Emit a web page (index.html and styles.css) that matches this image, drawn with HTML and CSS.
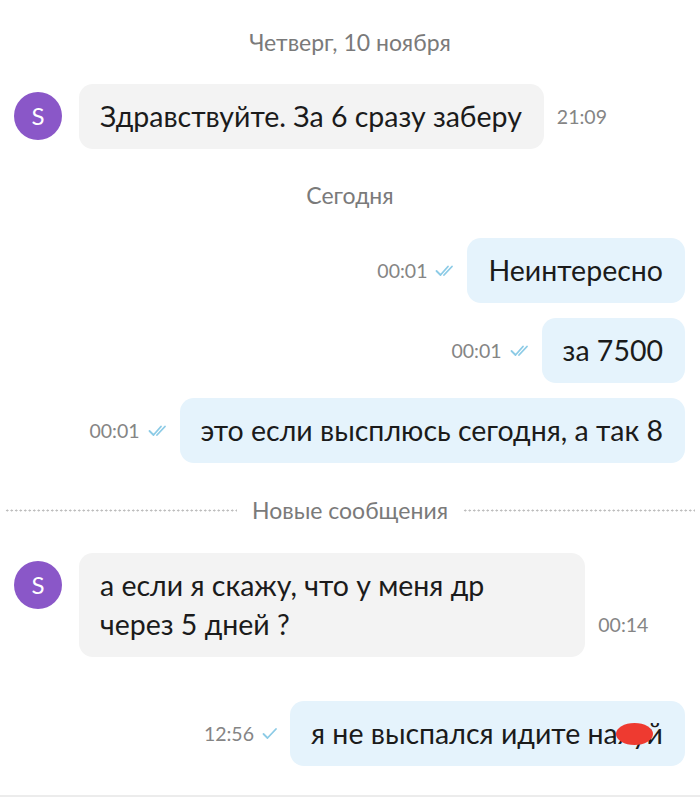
FILE: index.html
```html
<!DOCTYPE html>
<html lang="ru">
<head>
  <meta charset="UTF-8">
  <meta name="viewport" content="width=device-width, initial-scale=1.0">
  <title>Чат</title>
  <link rel="stylesheet" href="styles.css">
</head>
<body>
  <div class="chat">
    <div class="day first">Четверг, 10 ноября</div>

    <div class="row in">
      <div class="avatar">S</div>
      <div class="bubble">Здравствуйте. За 6 сразу заберу</div>
      <div class="time">21:09</div>
    </div>

    <div class="day">Сегодня</div>

    <div class="row out">
      <div class="time">00:01
        <svg class="check" width="22" height="13" viewBox="0 0 22 13"><path d="M1.5 7l4 4L13 2.5M9 11l8-8.5"/></svg>
      </div>
      <div class="bubble">Неинтересно</div>
    </div>

    <div class="row out">
      <div class="time">00:01
        <svg class="check" width="22" height="13" viewBox="0 0 22 13"><path d="M1.5 7l4 4L13 2.5M9 11l8-8.5"/></svg>
      </div>
      <div class="bubble">за 7500</div>
    </div>

    <div class="row out">
      <div class="time">00:01
        <svg class="check" width="22" height="13" viewBox="0 0 22 13"><path d="M1.5 7l4 4L13 2.5M9 11l8-8.5"/></svg>
      </div>
      <div class="bubble">это если высплюсь сегодня, а так 8</div>
    </div>

    <div class="divider">
      <span class="dots"></span>
      <span class="label">Новые сообщения</span>
      <span class="dots"></span>
    </div>

    <div class="row in">
      <div class="avatar">S</div>
      <div class="bubble wide">а если я скажу, что у меня др<br>через 5 дней ?</div>
      <div class="time">00:14</div>
    </div>

    <div class="row out last">
      <div class="time">12:56
        <svg class="check" width="18" height="13" viewBox="0 0 18 13"><path d="M1.5 7l4 4L14 2"/></svg>
      </div>
      <div class="bubble">я не выспался идите на<span class="blot">ху</span>й</div>
    </div>
  </div>
  <div class="bottom-line"></div>
</body>
</html>
```

FILE: styles.css
```css
body {
  margin: 0;
  padding: 0;
  background: #fff;
  font-family: Lato, "Noto Sans", sans-serif;
  color: #1b1b1b;
}
.chat {
  height: 795px;
  overflow: hidden;
}
.day {
  text-align: center;
  font-size: 23px;
  line-height: 28px;
  color: #7a7a7a;
  margin: 32px 0 29px;
}
.day.first {
  margin: 28px 0 28px;
}
.row {
  display: flex;
  align-items: flex-end;
  margin-bottom: 15px;
}
.row.in {
  padding-left: 14px;
}
.row.out {
  justify-content: flex-end;
  padding-right: 15px;
}
.avatar {
  align-self: flex-start;
  width: 48px;
  height: 48px;
  margin-top: 8px;
  margin-right: 17px;
  border-radius: 50%;
  background: #8a57c8;
  color: #fff;
  font-size: 24px;
  line-height: 48px;
  text-align: center;
}
.bubble {
  padding: 13px 22px 13px 21px;
  font-size: 28.5px;
  line-height: 39px;
  border-radius: 14px;
  white-space: nowrap;
}
.in .bubble {
  background: #f3f3f3;
}
.out .bubble {
  background: #e5f3fc;
}
.bubble.wide {
  padding-right: 101px;
}
.time {
  display: flex;
  align-items: center;
  font-size: 19.5px;
  line-height: 39px;
  padding-bottom: 13px;
  color: #858585;
}
.in .time {
  margin-left: 13px;
}
.out .time {
  margin-right: 10px;
}
.check {
  margin-left: 8px;
  fill: none;
  stroke: #8ccbe6;
  stroke-width: 1.8;
  stroke-linecap: round;
  stroke-linejoin: round;
}
.divider {
  display: flex;
  align-items: center;
  padding: 0 5px;
  margin: 33px 0 29px;
  line-height: 28px;
}
.dots {
  flex: 1;
  height: 3px;
  background-image: radial-gradient(circle, #bdbdbd 0.9px, transparent 1.2px);
  background-size: 4.5px 3px;
}
.divider .label {
  padding: 0 15px;
  font-size: 23px;
  color: #7a7a7a;
}
.row.last {
  margin-top: 44px;
}
.blot {
  position: relative;
}
.blot::after {
  content: "";
  position: absolute;
  left: -2px;
  right: -6px;
  top: 7px;
  bottom: 5px;
  background: #ee3a30;
  border-radius: 50%;
}
.bottom-line {
  height: 2px;
  background: #ececec;
}
```
